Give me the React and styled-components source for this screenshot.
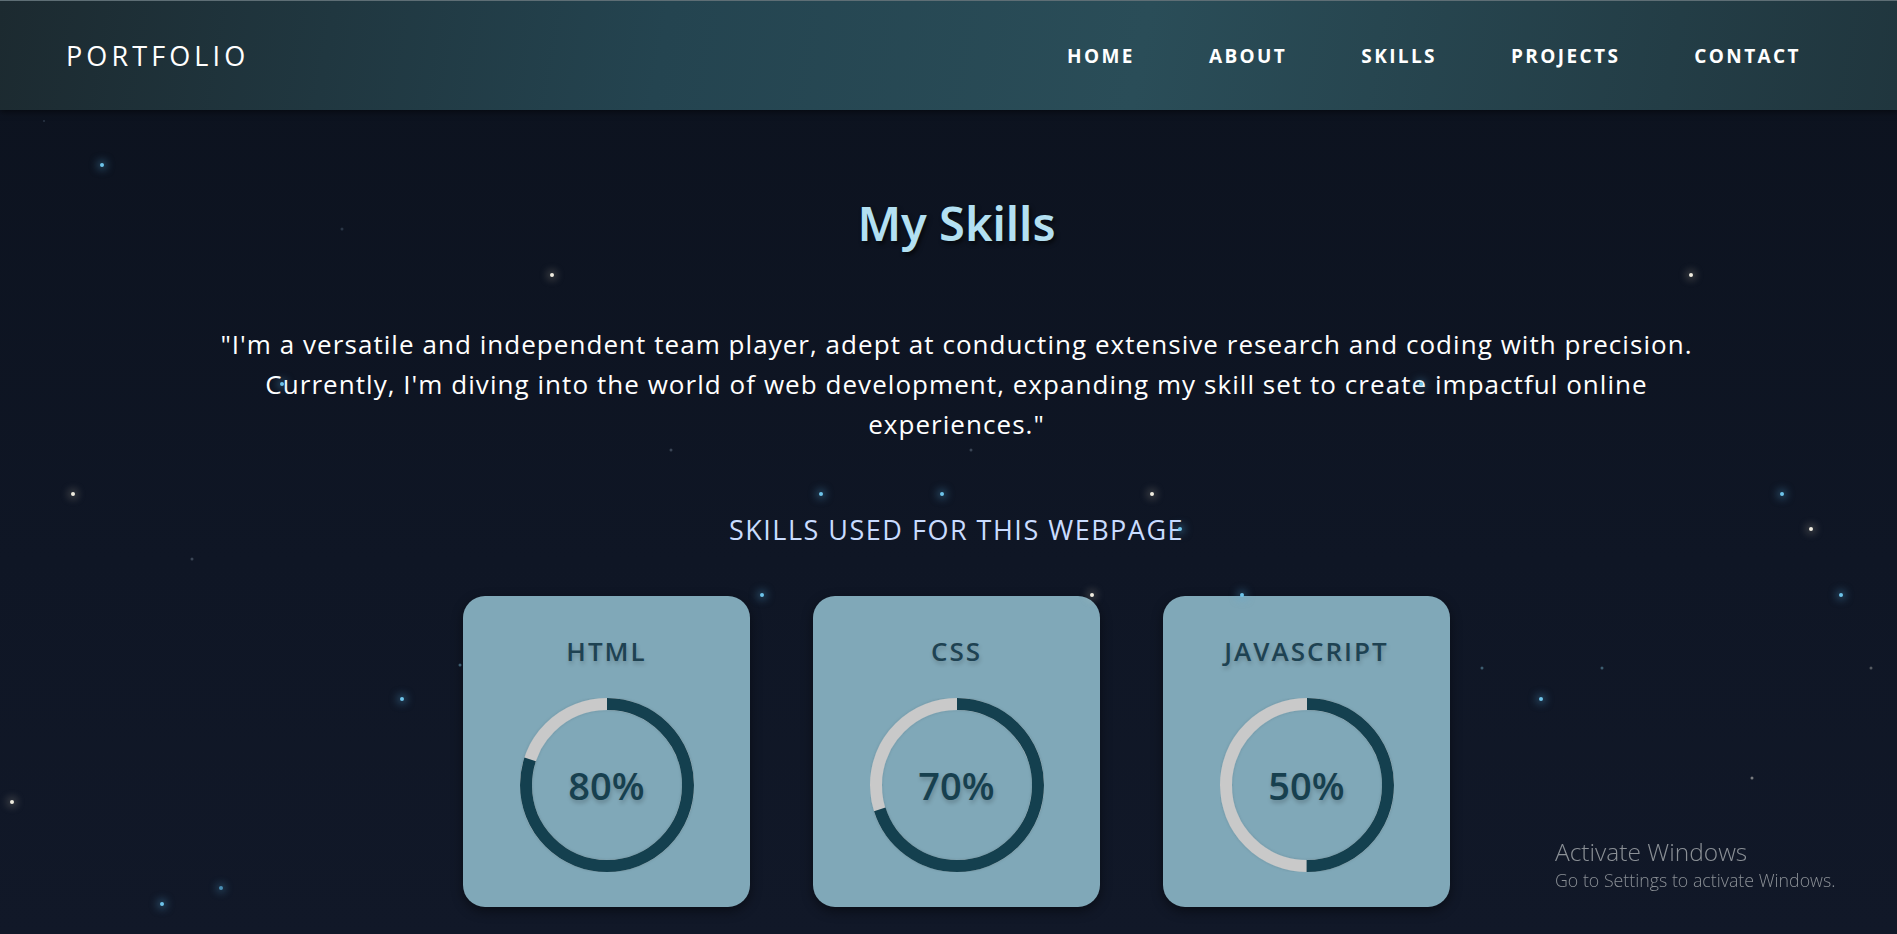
import React from 'react'
import styled, { createGlobalStyle } from 'styled-components'

const GlobalStyle = createGlobalStyle`
  * { box-sizing: border-box; }
  html, body {
    margin: 0;
    padding: 0;
    height: 100%;
    overflow: hidden;
    background: #0e1420;
    font-family: "Open Sans", "Noto Sans", sans-serif;
  }
  #root { height: 100%; }
`;

const Page = styled.div`
  position: relative;
  min-height: 100vh;
  background: linear-gradient(180deg, #0c121e 0%, #0f1625 60%, #111828 100%);
  overflow: hidden;
`;

// background stars - free canvas, so absolute is fine here
const Sky = styled.div`
  position: absolute;
  inset: 0;
  pointer-events: none;
  z-index: 2;
`;

const Star = styled.span`
  position: absolute;
  width: ${(p) => p.size}px;
  height: ${(p) => p.size}px;
  border-radius: 50%;
  background: ${(p) => p.color};
  box-shadow: 0 0 ${(p) => p.size * 2}px ${(p) => p.size / 2}px ${(p) => p.glow};
  transform: translate(-50%, -50%);
`;

const Header = styled.header`
  height: 110px;
  display: flex;
  align-items: center;
  justify-content: space-between;
  padding: 0 96px 0 66px;
  background: linear-gradient(100deg, #1c2a30 0%, #244450 35%, #2a4d58 60%, #20363e 100%);
  border-top: 1px solid #5e6e75;
  box-shadow: 0 2px 6px rgba(0, 0, 0, 0.5);
  position: relative;
  z-index: 1;
`;

const Logo = styled.div`
  color: #ffffff;
  font-family: "Open Sans", sans-serif;
  font-size: 27px;
  font-weight: 500;
  letter-spacing: 4.1px;
`;

const Nav = styled.nav`
  display: flex;
  gap: 74px;
`;

const NavLink = styled.a`
  color: #ffffff;
  font-family: "Open Sans", sans-serif;
  font-size: 19px;
  font-weight: 700;
  letter-spacing: 2.4px;
  text-decoration: none;
  cursor: pointer;
`;

const Main = styled.main`
  display: flex;
  flex-direction: column;
  align-items: center;
  padding: 86px 0 0 16px;
  position: relative;
  z-index: 1;
`;

const Title = styled.h1`
  margin: 0;
  font-family: "Noto Sans", sans-serif;
  font-size: 47px;
  font-weight: 600;
  line-height: 55px;
  color: #b3e0f2;
  text-shadow: 2px 3px 4px rgba(0, 0, 0, 0.6);
`;

const Quote = styled.p`
  margin: 73px 0 0;
  max-width: 1700px;
  text-align: center;
  color: #ffffff;
  font-family: "Open Sans", sans-serif;
  font-size: 26px;
  letter-spacing: 1.05px;
  line-height: 40px;
`;

const SubTitle = styled.h2`
  margin: 69px 0 0;
  font-family: "Open Sans", sans-serif;
  font-size: 27px;
  font-weight: 500;
  line-height: 34px;
  color: #c9dcff;
  letter-spacing: 1.5px;
`;

const Cards = styled.div`
  display: flex;
  gap: 63px;
  margin-top: 49px;
`;

const Card = styled.div`
  width: 287px;
  height: 311px;
  background: #80a8b8;
  border-radius: 22px;
  box-shadow: 0 4px 12px rgba(0, 0, 0, 0.45);
  display: flex;
  flex-direction: column;
  align-items: center;
  padding-top: 39px;
`;

const CardTitle = styled.h3`
  margin: 0;
  font-family: "Open Sans", sans-serif;
  font-size: 26px;
  font-weight: 600;
  line-height: 32px;
  letter-spacing: 2px;
  color: #1e4252;
  text-shadow: 1px 3px 4px rgba(0, 0, 0, 0.18);
`;

const Ring = styled.div`
  position: relative;
  width: 174px;
  height: 174px;
  margin-top: 31px;
  display: flex;
  align-items: center;
  justify-content: center;
`;

const RingSvg = styled.svg`
  position: absolute;
  inset: 0;
  transform: rotate(-90deg);
`;

const Percent = styled.span`
  position: relative;
  font-family: "Open Sans", sans-serif;
  font-size: 38px;
  font-weight: 600;
  color: #17404f;
  text-shadow: 1px 3px 4px rgba(0, 0, 0, 0.2);
`;

const Watermark = styled.div`
  position: fixed;
  left: 1555px;
  top: 837px;
  color: #8b9096;
  font-family: "Open Sans", "Noto Sans", sans-serif;
  font-weight: 300;
  z-index: 3;
`;

const WmTitle = styled.div`
  font-size: 24.5px;
  line-height: 30px;
`;

const WmText = styled.div`
  font-size: 17.8px;
  line-height: 26px;
`;

const skills = [
  { name: 'HTML', value: 80 },
  { name: 'CSS', value: 70 },
  { name: 'JAVASCRIPT', value: 50 },
];

const stars = [
  [102, 165, 4, '#6ec4ea', 'rgba(90,180,230,0.5)'],
  [44, 121, 2, '#2a3646', 'transparent'],
  [342, 229, 3, '#2a3646', 'transparent'],
  [552, 275, 4, '#f0ecdf', 'rgba(240,230,200,0.35)'],
  [1691, 275, 4, '#f0ecdf', 'rgba(240,230,200,0.35)'],
  [282, 384, 4, '#6ec4ea', 'rgba(90,180,230,0.5)'],
  [1421, 384, 4, '#6ec4ea', 'rgba(90,180,230,0.5)'],
  [671, 450, 3, '#3b4656', 'transparent'],
  [971, 450, 3, '#3b4656', 'transparent'],
  [73, 494, 4, '#f0ecdf', 'rgba(240,230,200,0.35)'],
  [821, 494, 4, '#6ec4ea', 'rgba(90,180,230,0.5)'],
  [942, 494, 4, '#6ec4ea', 'rgba(90,180,230,0.5)'],
  [1152, 494, 4, '#f0ecdf', 'rgba(240,230,200,0.35)'],
  [1782, 494, 4, '#6ec4ea', 'rgba(90,180,230,0.5)'],
  [1811, 529, 4, '#f0ecdf', 'rgba(240,230,200,0.35)'],
  [1180, 529, 4, '#6ec4ea', 'rgba(90,180,230,0.5)'],
  [192, 559, 3, '#3b4656', 'transparent'],
  [762, 595, 4, '#6ec4ea', 'rgba(90,180,230,0.5)'],
  [1092, 595, 4, '#f0ecdf', 'rgba(240,230,200,0.35)'],
  [1242, 595, 4, '#6ec4ea', 'rgba(90,180,230,0.5)'],
  [1841, 595, 4, '#6ec4ea', 'rgba(90,180,230,0.5)'],
  [460, 665, 3, '#3d5d70', 'transparent'],
  [1482, 668, 3, '#3d5d70', 'transparent'],
  [1602, 668, 3, '#3d5d70', 'transparent'],
  [1871, 668, 3, '#555a60', 'transparent'],
  [402, 699, 4, '#6ec4ea', 'rgba(90,180,230,0.5)'],
  [1541, 699, 4, '#6ec4ea', 'rgba(90,180,230,0.5)'],
  [1752, 778, 3, '#777a7e', 'transparent'],
  [12, 802, 4, '#f0ecdf', 'rgba(240,230,200,0.35)'],
  [221, 888, 4, '#4a8fb4', 'rgba(90,180,230,0.4)'],
  [162, 904, 4, '#6ec4ea', 'rgba(90,180,230,0.5)'],
];

const SkillRing = ({ value }) => {
  const r = 81;
  const c = 2 * Math.PI * r;
  return (
    <RingSvg width="174" height="174" viewBox="0 0 174 174">
      <defs>
        <filter id="inset" x="-10%" y="-10%" width="120%" height="120%">
          <feDropShadow dx="0" dy="0" stdDeviation="1.5" floodColor="#000" floodOpacity="0.15" />
        </filter>
      </defs>
      <circle cx="87" cy="87" r={r} fill="none" stroke="#c9c9c9" strokeWidth="12" filter="url(#inset)" />
      <circle
        cx="87"
        cy="87"
        r={r}
        fill="none"
        stroke="#14404f"
        strokeWidth="12"
        strokeDasharray={`${(c * value) / 100} ${c}`}
      />
    </RingSvg>
  );
};

export default function App() {
  return (
    <Page>
      <GlobalStyle />
      <Sky>
        {stars.map(([x, y, s, color, glow], i) => (
          <Star key={i} size={s} color={color} glow={glow} style={{ left: x, top: y }} />
        ))}
      </Sky>
      <Header>
        <Logo>PORTFOLIO</Logo>
        <Nav>
          <NavLink>HOME</NavLink>
          <NavLink>ABOUT</NavLink>
          <NavLink>SKILLS</NavLink>
          <NavLink>PROJECTS</NavLink>
          <NavLink>CONTACT</NavLink>
        </Nav>
      </Header>
      <Main>
        <Title>My Skills</Title>
        <Quote>
          "I'm a versatile and independent team player, adept at conducting extensive research and coding with precision.
          <br />
          Currently, I'm diving into the world of web development, expanding my skill set to create impactful online
          <br />
          experiences."
        </Quote>
        <SubTitle>SKILLS USED FOR THIS WEBPAGE</SubTitle>
        <Cards>
          {skills.map((s) => (
            <Card key={s.name}>
              <CardTitle>{s.name}</CardTitle>
              <Ring>
                <SkillRing value={s.value} />
                <Percent>{s.value}%</Percent>
              </Ring>
            </Card>
          ))}
        </Cards>
      </Main>
      <Watermark>
        <WmTitle>Activate Windows</WmTitle>
        <WmText>Go to Settings to activate Windows.</WmText>
      </Watermark>
    </Page>
  );
}
